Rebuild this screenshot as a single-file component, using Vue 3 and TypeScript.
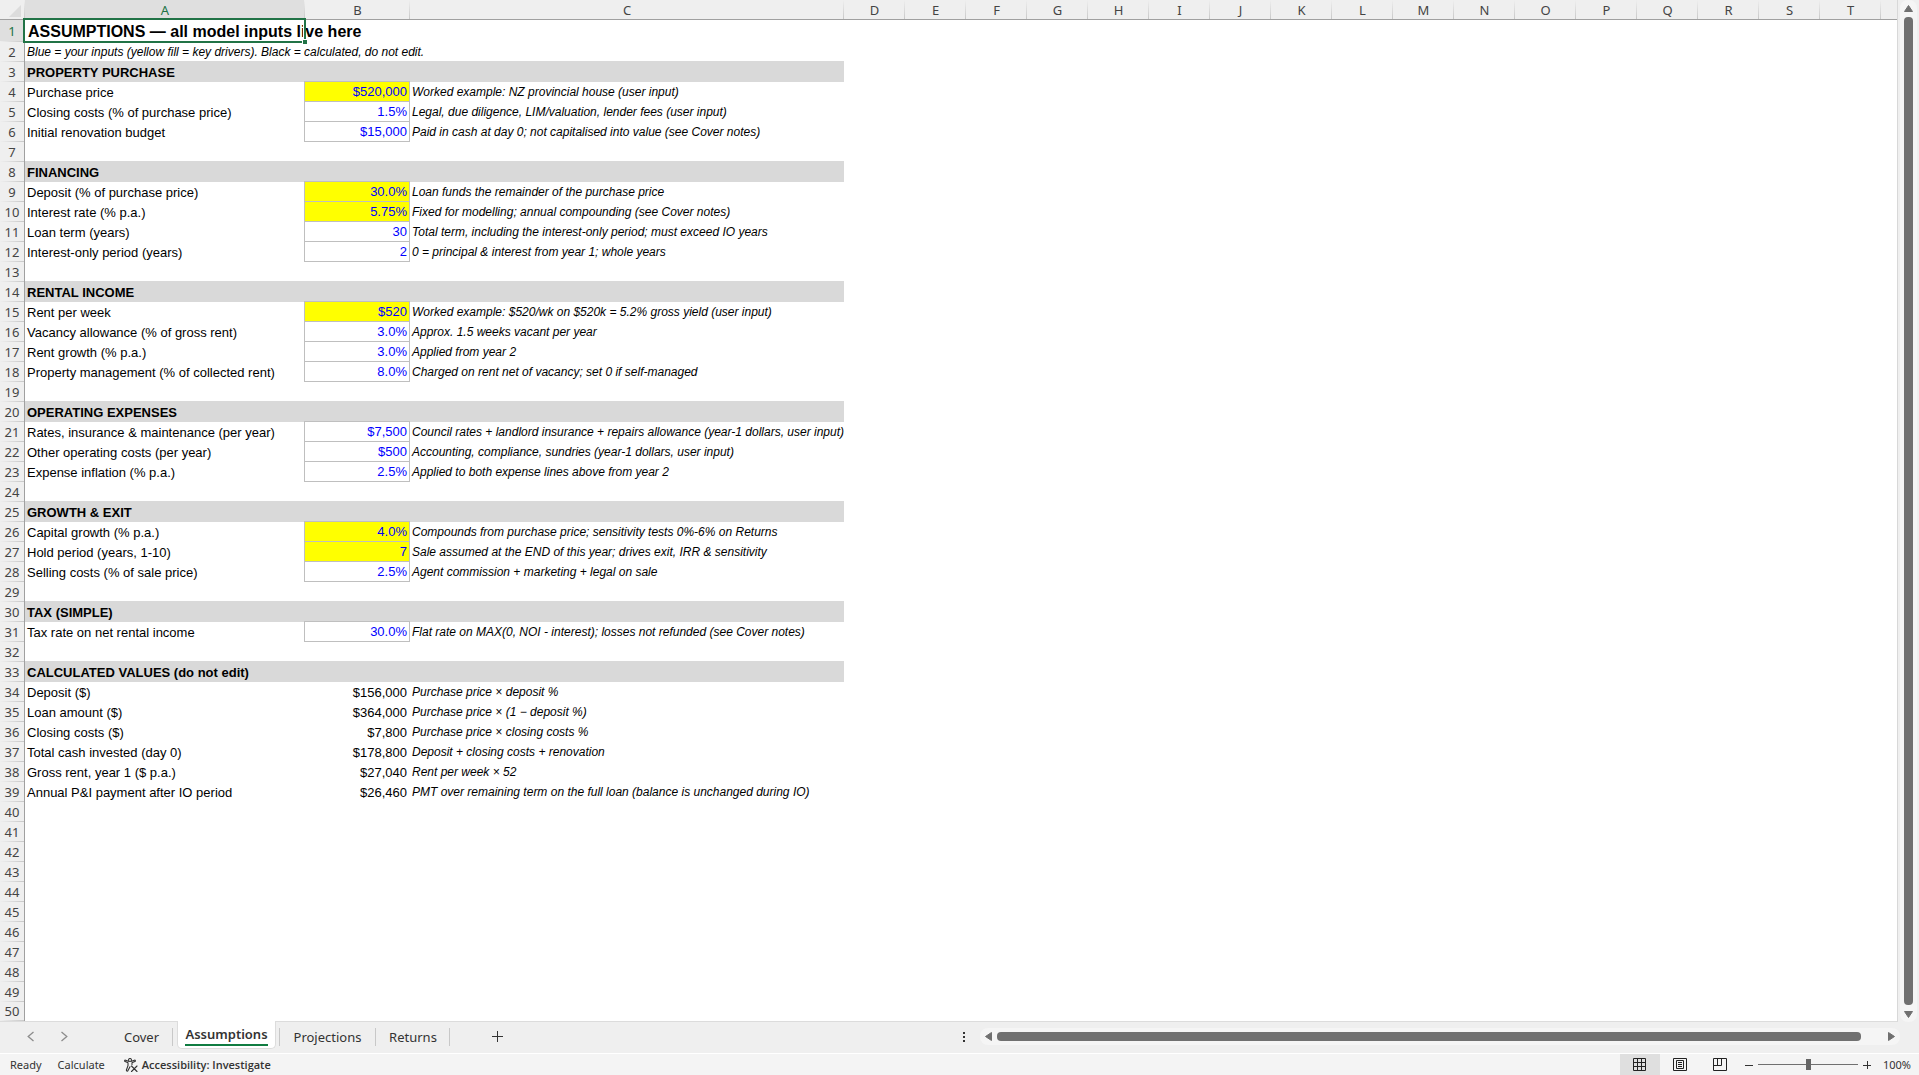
<script setup lang="ts">
interface Row {
  kind: 'title' | 'hint' | 'section' | 'input' | 'key' | 'calc' | 'blank'
  label?: string
  value?: string
  note?: string
}

const title = (label: string): Row => ({ kind: 'title', label })
const hint = (label: string): Row => ({ kind: 'hint', label })
const section = (label: string): Row => ({ kind: 'section', label })
const input = (label: string, value: string, note: string): Row => ({ kind: 'input', label, value, note })
const key = (label: string, value: string, note: string): Row => ({ kind: 'key', label, value, note })
const calc = (label: string, value: string, note: string): Row => ({ kind: 'calc', label, value, note })
const blank: Row = { kind: 'blank' }

const content: Row[] = [
  title('ASSUMPTIONS — all model inputs live here'),
  hint('Blue = your inputs (yellow fill = key drivers). Black = calculated, do not edit.'),
  section('PROPERTY PURCHASE'),
  key('Purchase price', '$520,000', 'Worked example: NZ provincial house (user input)'),
  input('Closing costs (% of purchase price)', '1.5%', 'Legal, due diligence, LIM/valuation, lender fees (user input)'),
  input('Initial renovation budget', '$15,000', 'Paid in cash at day 0; not capitalised into value (see Cover notes)'),
  blank,
  section('FINANCING'),
  key('Deposit (% of purchase price)', '30.0%', 'Loan funds the remainder of the purchase price'),
  key('Interest rate (% p.a.)', '5.75%', 'Fixed for modelling; annual compounding (see Cover notes)'),
  input('Loan term (years)', '30', 'Total term, including the interest-only period; must exceed IO years'),
  input('Interest-only period (years)', '2', '0 = principal & interest from year 1; whole years'),
  blank,
  section('RENTAL INCOME'),
  key('Rent per week', '$520', 'Worked example: $520/wk on $520k = 5.2% gross yield (user input)'),
  input('Vacancy allowance (% of gross rent)', '3.0%', 'Approx. 1.5 weeks vacant per year'),
  input('Rent growth (% p.a.)', '3.0%', 'Applied from year 2'),
  input('Property management (% of collected rent)', '8.0%', 'Charged on rent net of vacancy; set 0 if self-managed'),
  blank,
  section('OPERATING EXPENSES'),
  input('Rates, insurance & maintenance (per year)', '$7,500', 'Council rates + landlord insurance + repairs allowance (year-1 dollars, user input)'),
  input('Other operating costs (per year)', '$500', 'Accounting, compliance, sundries (year-1 dollars, user input)'),
  input('Expense inflation (% p.a.)', '2.5%', 'Applied to both expense lines above from year 2'),
  blank,
  section('GROWTH & EXIT'),
  key('Capital growth (% p.a.)', '4.0%', 'Compounds from purchase price; sensitivity tests 0%-6% on Returns'),
  key('Hold period (years, 1-10)', '7', 'Sale assumed at the END of this year; drives exit, IRR & sensitivity'),
  input('Selling costs (% of sale price)', '2.5%', 'Agent commission + marketing + legal on sale'),
  blank,
  section('TAX (SIMPLE)'),
  input('Tax rate on net rental income', '30.0%', 'Flat rate on MAX(0, NOI - interest); losses not refunded (see Cover notes)'),
  blank,
  section('CALCULATED VALUES (do not edit)'),
  calc('Deposit ($)', '$156,000', 'Purchase price × deposit %'),
  calc('Loan amount ($)', '$364,000', 'Purchase price × (1 − deposit %)'),
  calc('Closing costs ($)', '$7,800', 'Purchase price × closing costs %'),
  calc('Total cash invested (day 0)', '$178,800', 'Deposit + closing costs + renovation'),
  calc('Gross rent, year 1 ($ p.a.)', '$27,040', 'Rent per week × 52'),
  calc('Annual P&I payment after IO period', '$26,460', 'PMT over remaining term on the full loan (balance is unchanged during IO)'),
]

const rows: Row[] = [...content, ...Array.from({ length: 50 - content.length }, () => blank)]
const otherColumns = 'DEFGHIJKLMNOPQRST'.split('')
</script>

<template>
  <div class="app">
    <div class="body">
      <main class="sheet">
        <table class="grid">
          <colgroup>
            <col class="col-head" />
            <col class="col-a" />
            <col class="col-b" />
            <col class="col-c" />
            <col v-for="c in otherColumns" :key="c" class="col-std" />
            <col />
          </colgroup>
          <thead>
            <tr>
              <th class="corner"><svg width="12" height="12" viewBox="0 0 12 12"><path d="M12 0V12H0Z" fill="#dcdcdc" /></svg></th>
              <th scope="col" class="active">A</th>
              <th scope="col">B</th>
              <th scope="col">C</th>
              <th v-for="c in otherColumns" :key="c" scope="col">{{ c }}</th>
              <th class="rest"></th>
            </tr>
          </thead>
          <tbody>
            <tr v-for="(row, i) in rows" :key="i" :class="row.kind">
              <th scope="row" :class="{ active: i === 0 }">{{ i + 1 }}</th>
              <td class="label"><span v-if="row.label">{{ row.label }}</span><i v-if="i === 0" class="selection"></i></td>
              <td class="value">{{ row.value }}</td>
              <td class="note">{{ row.note }}</td>
            </tr>
          </tbody>
        </table>
      </main>
      <div class="vscroll">
        <div class="vtrack">
          <svg width="9" height="7" viewBox="0 0 9 7"><path d="M4.5 0.5L8.5 6.5H0.5Z" fill="#707070" stroke="#707070" stroke-linejoin="round" /></svg>
          <div class="vthumb"></div>
          <svg width="9" height="7" viewBox="0 0 9 7"><path d="M4.5 6.5L8.5 0.5H0.5Z" fill="#707070" stroke="#707070" stroke-linejoin="round" /></svg>
        </div>
      </div>
    </div>

    <div class="tabbar">
      <div class="arrows">
        <button type="button" aria-label="Previous sheet"><svg width="8" height="11" viewBox="0 0 8 11"><path d="M6.5 1L1.2 5.5L6.5 10" fill="none" stroke="#8c8c8c" stroke-width="1.3" /></svg></button>
        <button type="button" aria-label="Next sheet"><svg width="8" height="11" viewBox="0 0 8 11"><path d="M1.5 1L6.8 5.5L1.5 10" fill="none" stroke="#8c8c8c" stroke-width="1.3" /></svg></button>
      </div>
      <nav class="tabs">
        <button type="button" class="tab cover">Cover</button>
        <button type="button" class="tab current"><span>Assumptions</span></button>
        <button type="button" class="tab projections">Projections</button>
        <button type="button" class="tab returns">Returns</button>
      </nav>
      <button type="button" class="add" aria-label="New sheet"><svg width="11" height="11" viewBox="0 0 11 11"><path d="M5.5 0V11M0 5.5H11" stroke="#333" stroke-width="1" /></svg></button>
      <div class="hscroll">
        <svg class="dots" width="2" height="10" viewBox="0 0 2 10"><path d="M0 0h2v2h-2zM0 4h2v2h-2zM0 8h2v2h-2z" fill="#333" /></svg>
        <div class="htrack">
          <svg width="7" height="9" viewBox="0 0 7 9"><path d="M0.5 4.5L6.5 0.5V8.5Z" fill="#707070" stroke="#707070" stroke-linejoin="round" /></svg>
          <div class="hthumb"></div>
          <svg width="7" height="9" viewBox="0 0 7 9"><path d="M6.5 4.5L0.5 0.5V8.5Z" fill="#707070" stroke="#707070" stroke-linejoin="round" /></svg>
        </div>
      </div>
    </div>

    <footer class="status">
      <span class="ready">Ready</span>
      <span class="calculate">Calculate</span>
      <button type="button" class="access">
        <svg width="14" height="14" viewBox="0 0 14 14" fill="none" stroke="#333" stroke-width="1.1" stroke-linejoin="round" stroke-linecap="round">
          <circle cx="6" cy="2" r="1.5" />
          <path d="M4.5 3.2L1.6 2.2C0.5 2 0.3 3.2 1.2 3.6L4 4.8V7.6L2.4 12C2.3 13.2 3.6 13.5 4 12.6L6 8.8M7.5 3.2L10.4 2.2C11.5 2 11.7 3.2 10.8 3.6L8 4.8V6.6" />
          <path d="M7.5 8L13 13.5M13 8L7.5 13.5" />
        </svg>
        <span>Accessibility: Investigate</span>
      </button>
      <div class="views">
        <button type="button" class="view on" aria-label="Normal view"><svg width="14" height="14" viewBox="0 0 14 14"><path d="M0.5 0.5H12.5V12.5H0.5ZM4.5 0.5V12.5M8.5 0.5V12.5M0.5 4.5H12.5M0.5 8.5H12.5" fill="none" stroke="#222" /></svg></button>
        <button type="button" class="view" aria-label="Page layout"><svg width="14" height="14" viewBox="0 0 14 14"><path d="M0.5 0.5H13.5V12.5H0.5ZM3.5 2.5H10.5V10.5H3.5ZM5 4.5H9M5 6.5H9M5 8.5H9" fill="none" stroke="#222" /></svg></button>
        <button type="button" class="view" aria-label="Page break preview"><svg width="14" height="14" viewBox="0 0 14 14"><path d="M0.5 0.5H13.5V12.5H0.5ZM4.5 0.5V7.5M8.5 0.5V7.5M0.5 7.5H8.5" fill="none" stroke="#222" /></svg></button>
      </div>
      <button type="button" class="step" aria-label="Zoom out"><svg width="8" height="8" viewBox="0 0 8 8"><path d="M0 4.5H8" stroke="#333" /></svg></button>
      <input class="slider" type="range" min="0" max="100" value="50" aria-label="Zoom" />
      <button type="button" class="step" aria-label="Zoom in"><svg width="8" height="8" viewBox="0 0 8 8"><path d="M0 4.5H8M4.5 0V8" stroke="#333" /></svg></button>
      <span class="percent">100%</span>
    </footer>
  </div>
</template>

<style>
body {
  margin: 0;
}
</style>

<style scoped>
.app {
  display: flex;
  flex-direction: column;
  min-height: 100vh;
  background: #efefef;
  font-family: "Noto Sans", sans-serif;
  color: #333;
}
button {
  font: inherit;
  color: inherit;
  border: 0;
  padding: 0;
  background: none;
}
svg {
  display: block;
  flex: none;
}
.body {
  display: flex;
}
.sheet {
  flex: 1;
  min-width: 0;
  background: #fff;
  border-right: 1px solid #d8d8d8;
  border-bottom: 1px solid #dcdcdc;
  overflow: hidden;
}
.grid {
  width: 100%;
  table-layout: fixed;
  border-collapse: separate;
  border-spacing: 0;
}
.col-head { width: 25px; }
.col-a { width: 280px; }
.col-b { width: 105px; }
.col-c { width: 434px; }
.col-std { width: 61px; }

th {
  box-sizing: border-box;
  padding: 0;
  font-size: 13px;
  font-weight: 400;
  color: #444;
  background: #efefef;
}
thead th {
  height: 20px;
  padding-top: 2px;
  line-height: 17px;
  border-bottom: 1px solid #a0a0a0;
  background: linear-gradient(#efefef, #c8c8c8) right / 1px 100% no-repeat #efefef;
}
tbody th {
  height: 20px;
  line-height: 19px;
  border-right: 1px solid #a0a0a0;
  background: linear-gradient(90deg, #efefef, #c8c8c8) bottom / 100% 1px no-repeat #efefef;
}
thead th.active,
tbody th.active {
  background-color: #dfdfdf;
  color: #217346;
}
thead th.rest {
  background: #efefef;
}
.corner svg {
  margin-left: 9px;
}
td {
  box-sizing: border-box;
  height: 20px;
  padding: 0 2px;
  font: 13px/19px "Liberation Sans", Arial, sans-serif;
  color: #000;
  white-space: nowrap;
  overflow: visible;
}
.title th,
.title td {
  height: 22px;
}
.title td {
  position: relative;
  padding-left: 3px;
  font-size: 16px;
  font-weight: 700;
}
.hint td,
td.note {
  padding-top: 1px;
  font-size: 12px;
  font-style: italic;
}
.section td {
  background: #d9d9d9;
  box-shadow: 0 -1px #d9d9d9;
  font-weight: 700;
}
.blank:last-child th,
.blank:last-child td {
  height: 19px;
}
td.value {
  padding-right: 3px;
  text-align: right;
}
.input .value,
.key .value {
  color: #00f;
  border-right: 1px solid #bfbfbf;
  border-bottom: 1px solid #bfbfbf;
  box-shadow: -1px 0 #bfbfbf, 0 -1px #bfbfbf, -1px -1px #bfbfbf;
  padding-right: 2px;
}
.key .value {
  background: #ff0;
}
.selection {
  position: absolute;
  inset: -2px -1px -1px -2px;
  border: 2px solid #217346;
  box-shadow: inset 0 0 0 1px #fff;
}
.selection::after {
  content: "";
  position: absolute;
  right: -3px;
  bottom: -3px;
  width: 4px;
  height: 4px;
  border: 1px solid #fff;
  border-right: 0;
  border-bottom: 0;
  background: #217346;
}

.vscroll {
  display: flex;
  width: 21px;
}
.vtrack {
  display: flex;
  flex-direction: column;
  align-items: center;
  flex: 1;
  gap: 5px;
  margin: 0 2px;
  padding: 5px 0 4px;
  border-radius: 8px;
  background: #f5f5f5;
}
.vthumb {
  flex: 1;
  width: 9px;
  margin-bottom: 1px;
  border-radius: 4px;
  background: #707070;
}

.tabbar {
  display: flex;
  height: 29px;
  padding-bottom: 2px;
  border-bottom: 1px solid #fff;
  font-size: 13px;
}
.tabbar > * {
  flex: none;
}
.arrows {
  box-sizing: border-box;
  display: flex;
  align-items: center;
  gap: 25px;
  width: 110px;
  padding-left: 27px;
}
.tabs {
  display: flex;
  align-items: flex-start;
}
.tab {
  box-sizing: border-box;
  flex: none;
  height: 30px;
  line-height: 30px;
  text-align: center;
  background: linear-gradient(#c8c8c8, #c8c8c8) right 6px / 1px 18px no-repeat;
}
.cover { width: 63px; margin-right: 4px; }
.projections {
  width: 97px;
  background:
    linear-gradient(#c8c8c8, #c8c8c8) left 6px / 1px 18px no-repeat,
    linear-gradient(#c8c8c8, #c8c8c8) right 6px / 1px 18px no-repeat;
}
.returns { width: 74px; }
.tab.current {
  width: 99px;
  height: 28px;
  margin-top: -1px;
  margin-right: 3px;
  display: flex;
  justify-content: center;
  background: #fff;
  border: 1px solid #dcdcdc;
  border-top: 0;
  border-radius: 0 0 5px 5px;
  font-weight: 600;
}
.current span {
  height: 23px;
  line-height: 26px;
  border-bottom: 2px solid #107c41;
}
.add {
  width: 95px;
  display: flex;
  align-items: center;
  justify-content: center;
}
.tabbar .hscroll {
  display: flex;
  align-items: center;
  flex: 1;
  margin-left: 418px;
}
.dots { margin-right: 15px; }
.htrack {
  display: flex;
  align-items: center;
  flex: 1;
  gap: 5px;
  height: 17px;
  margin-right: 19px;
  padding: 0 5px;
  border-radius: 8px;
  background: #f5f5f5;
}
.hthumb {
  flex: 1;
  height: 9px;
  margin-right: 22px;
  border-radius: 4px;
  background: #707070;
}

.status {
  display: flex;
  align-items: center;
  flex: 1;
  min-height: 21px;
  background: #f4f4f4;
  font-size: 11px;
  line-height: 15px;
  padding: 0 8px 0 10px;
}
.calculate { margin-left: 16px; }
.access {
  display: flex;
  align-items: center;
  gap: 4px;
  margin-left: 19px;
  font-family: "Open Sans", sans-serif;
  font-weight: 600;
}
.views {
  display: flex;
  align-self: stretch;
  margin-left: auto;
}
.view {
  width: 40px;
  display: flex;
  align-items: center;
  justify-content: center;
}
.view.on { background: #dfdfdf; }
.step {
  margin: 0 5px;
}
.slider {
  appearance: none;
  width: 100px;
  height: 12px;
  margin: 0;
  background: linear-gradient(#707070, #707070) center / 100% 1px no-repeat;
}
.slider::-webkit-slider-thumb {
  appearance: none;
  width: 5px;
  height: 11px;
  background: #666;
}
.percent {
  width: 35px;
  text-align: right;
}
</style>
